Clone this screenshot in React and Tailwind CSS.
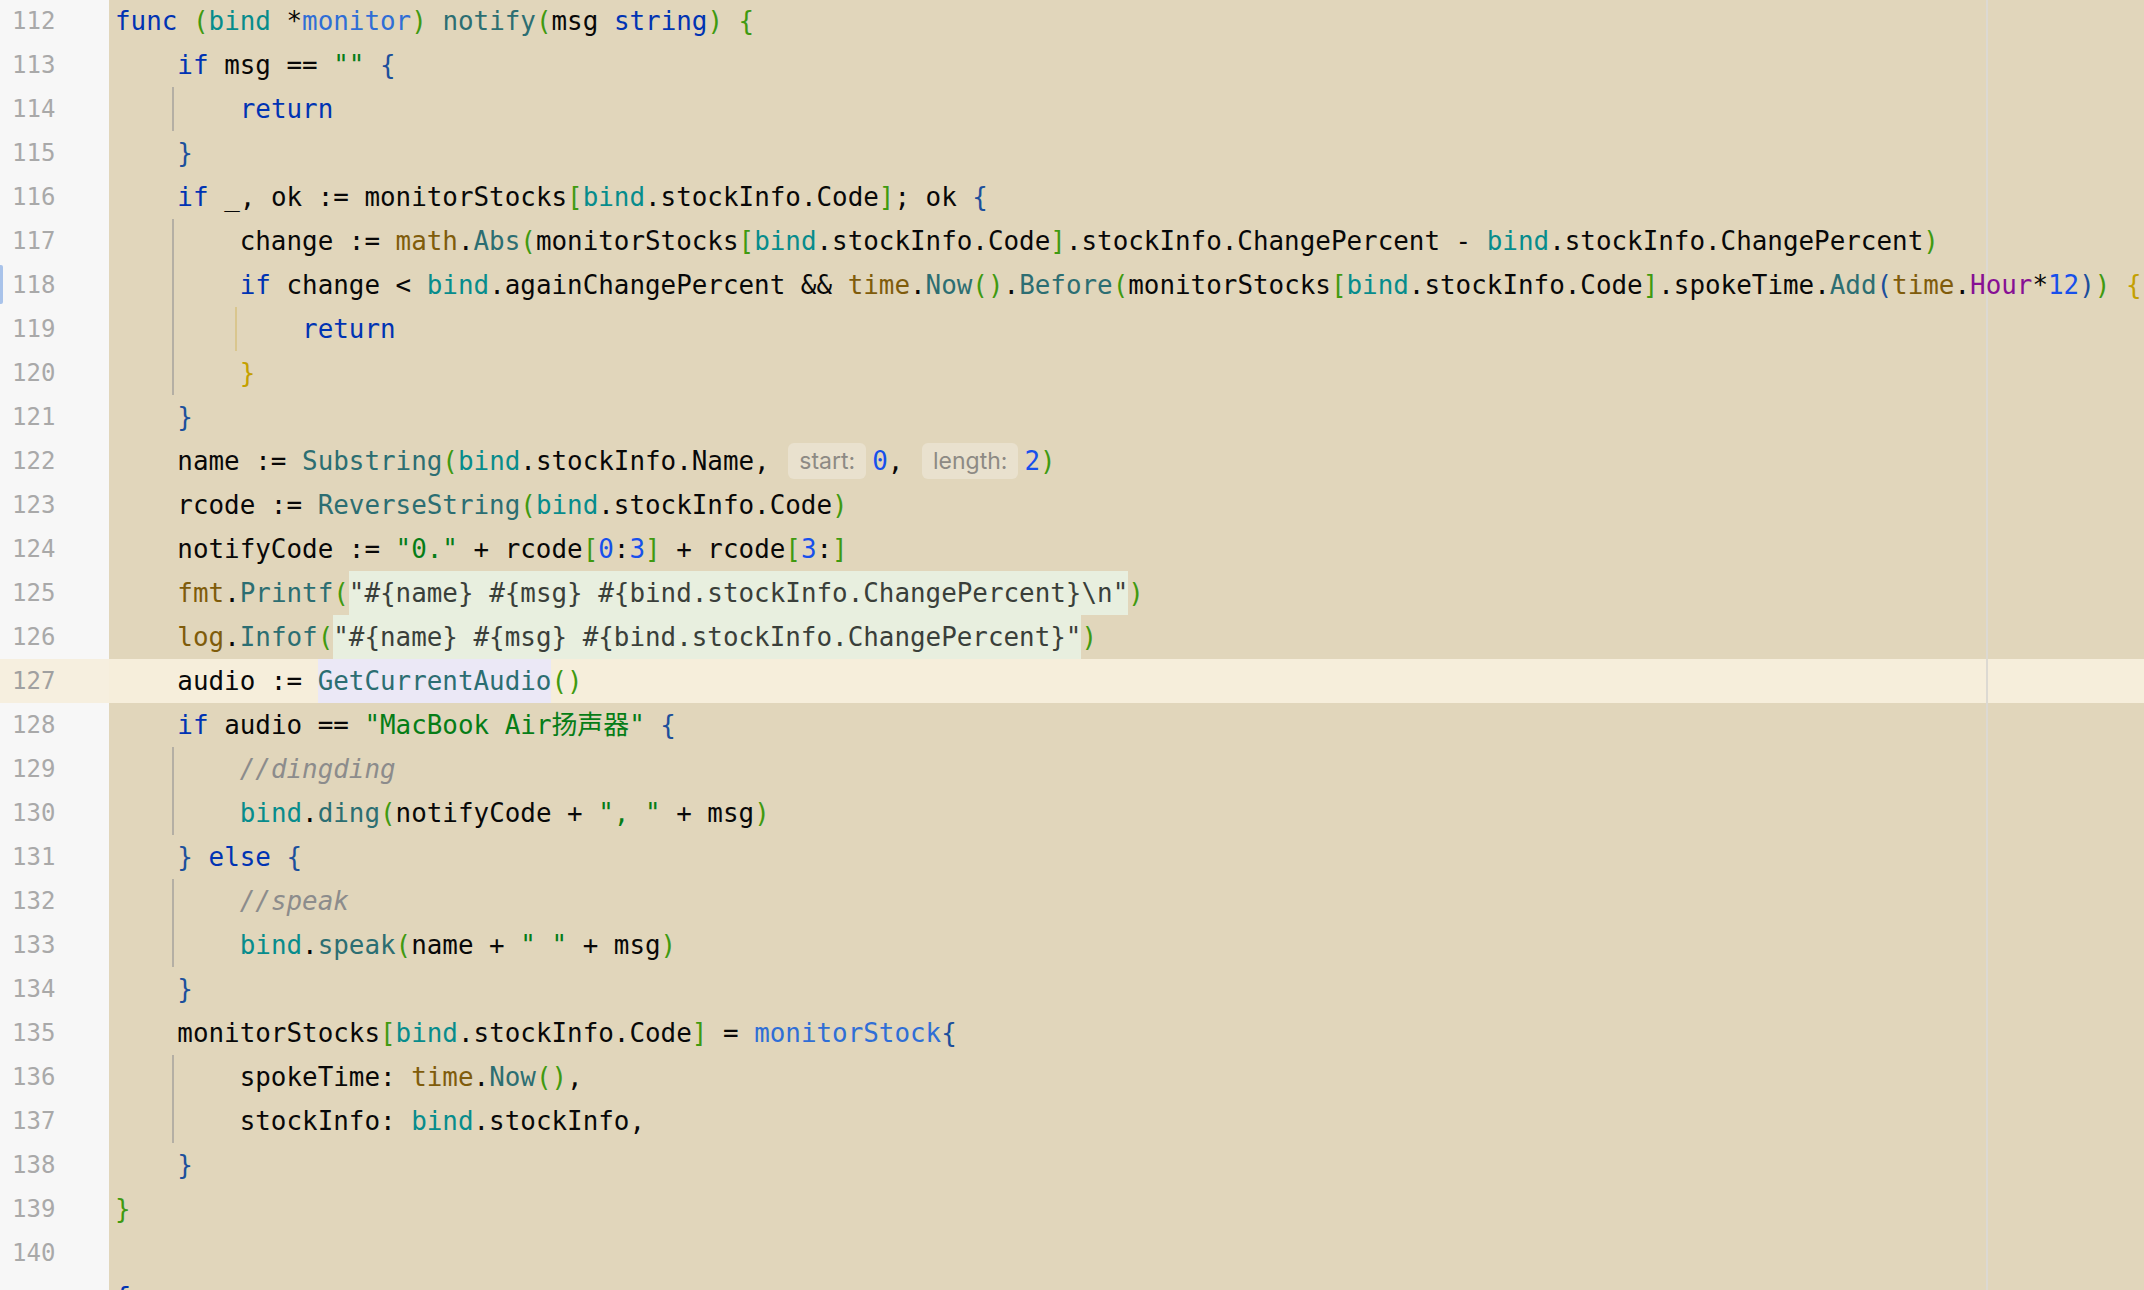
import React from "react";

const K = "text-[#0033b3]";
const R = "text-[#078c8c]";
const T = "text-[#2f6ed6]";
const F = "text-[#2c6e72]";
const P = "text-[#7f5c0b]";
const C = "text-[#871094]";
const N = "text-[#1750eb]";
const S = "text-[#067d17]";
const M = "text-[#8c8c8c] italic";
const G = "text-[#3f9a10]";
const B = "text-[#1b4f9c]";
const Y = "text-[#c4a000]";
const D = "text-[#080808]";
const SB = "text-[#3a3f3a] bg-[#e8efdf]";
const LV = "text-[#2c6e72] bg-[#ebe8f6]";

const t = (text, cls = D) => ({ text, cls });
const hint = (text) => ({ hint: text });

const lines = [
  [t("func", K), t(" "), t("(", G), t("bind", R), t(" *"), t("monitor", T), t(")", G), t(" "), t("notify", F), t("(", G), t("msg "), t("string", K), t(")", G), t(" "), t("{", G)],
  [t("    "), t("if", K), t(" msg == "), t('""', S), t(" "), t("{", B)],
  [t("        "), t("return", K)],
  [t("    "), t("}", B)],
  [t("    "), t("if", K), t(" _, ok := monitorStocks"), t("[", G), t("bind", R), t(".stockInfo.Code"), t("]", G), t("; ok "), t("{", B)],
  [t("        change := "), t("math", P), t("."), t("Abs", F), t("(", G), t("monitorStocks"), t("[", G), t("bind", R), t(".stockInfo.Code"), t("]", G), t(".stockInfo.ChangePercent - "), t("bind", R), t(".stockInfo.ChangePercent"), t(")", G)],
  [t("        "), t("if", K), t(" change < "), t("bind", R), t(".againChangePercent && "), t("time", P), t("."), t("Now", F), t("()", G), t("."), t("Before", F), t("(", G), t("monitorStocks"), t("[", G), t("bind", R), t(".stockInfo.Code"), t("]", G), t(".spokeTime."), t("Add", F), t("(", B), t("time", P), t("."), t("Hour", C), t("*"), t("12", N), t(")", B), t(")", G), t(" "), t("{", Y)],
  [t("            "), t("return", K)],
  [t("        "), t("}", Y)],
  [t("    "), t("}", B)],
  [t("    name := "), t("Substring", F), t("(", G), t("bind", R), t(".stockInfo.Name, "), hint("start:"), t("0", N), t(", "), hint("length:"), t("2", N), t(")", G)],
  [t("    rcode := "), t("ReverseString", F), t("(", G), t("bind", R), t(".stockInfo.Code"), t(")", G)],
  [t("    notifyCode := "), t('"0."', S), t(" + rcode"), t("[", G), t("0", N), t(":"), t("3", N), t("]", G), t(" + rcode"), t("[", G), t("3", N), t(":"), t("]", G)],
  [t("    "), t("fmt", P), t("."), t("Printf", F), t("(", G), t('"#{name} #{msg} #{bind.stockInfo.ChangePercent}\\n"', SB), t(")", G)],
  [t("    "), t("log", P), t("."), t("Infof", F), t("(", G), t('"#{name} #{msg} #{bind.stockInfo.ChangePercent}"', SB), t(")", G)],
  [t("    audio := "), t("GetCurrentAudio", LV), t("()", G)],
  [t("    "), t("if", K), t(" audio == "), t('"MacBook Air扬声器"', S), t(" "), t("{", B)],
  [t("        "), t("//dingding", M)],
  [t("        "), t("bind", R), t("."), t("ding", F), t("(", G), t("notifyCode + "), t('", "', S), t(" + msg"), t(")", G)],
  [t("    "), t("}", B), t(" "), t("else", K), t(" "), t("{", B)],
  [t("        "), t("//speak", M)],
  [t("        "), t("bind", R), t("."), t("speak", F), t("(", G), t("name + "), t('" "', S), t(" + msg"), t(")", G)],
  [t("    "), t("}", B)],
  [t("    monitorStocks"), t("[", G), t("bind", R), t(".stockInfo.Code"), t("]", G), t(" = "), t("monitorStock", T), t("{", B)],
  [t("        spokeTime: "), t("time", P), t("."), t("Now", F), t("()", G), t(",")],
  [t("        stockInfo: "), t("bind", R), t(".stockInfo,")],
  [t("    "), t("}", B)],
  [t("}", G)],
  [],
  [t("func", K)],
];

const GRAY = "bg-[#b4afa4]";
const YEL = "bg-[#d9c68e]";
const guides = {
  114: [["left-[63px]", GRAY]],
  117: [["left-[63px]", GRAY]],
  118: [["left-[63px]", GRAY]],
  119: [["left-[63px]", GRAY], ["left-[126px]", YEL]],
  120: [["left-[63px]", GRAY]],
  129: [["left-[63px]", GRAY]],
  130: [["left-[63px]", GRAY]],
  132: [["left-[63px]", GRAY]],
  133: [["left-[63px]", GRAY]],
  136: [["left-[63px]", GRAY]],
  137: [["left-[63px]", GRAY]],
};

function Token({ tok }) {
  if (tok.hint) {
    return (
      <span className="ml-[3px] mr-[6px] flex h-[36px] items-center rounded-[6px] bg-[#e9e1ce] px-[11px] font-['Inter',sans-serif] text-[23px] leading-[36px] text-[#8d8a84]">
        {tok.hint}
      </span>
    );
  }
  return <span className={tok.cls}>{tok.text}</span>;
}

function Row({ num, toks }) {
  const current = num === 127;
  return (
    <div className={`flex h-[44px] ${current ? "bg-[#f6eedb]" : ""}`}>
      <div
        className={`relative w-[109px] shrink-0 pl-[12px] font-['DejaVu_Sans_Mono',monospace] text-[24px] leading-[44px] ${
          current ? "bg-[#f6efdf] text-[#a0a0a0]" : "bg-[#f7f7f7] text-[#a9a9a9]"
        }`}
      >
        {num <= 140 ? num : ""}
        {num === 118 && (
          <span className="absolute left-0 top-[2px] bottom-[3px] w-[3px] rounded-r-[2px] bg-[#a9c3ea]" />
        )}
      </div>
      <div className="relative z-[1] flex h-[44px] items-center whitespace-pre pl-[6px] font-['DejaVu_Sans_Mono','Noto_Sans_CJK_SC',monospace] text-[25.9px] leading-[44px] text-[#080808]">
        {(guides[num] || []).map(([l, c], i) => (
          <span key={i} className={`absolute top-0 bottom-0 w-[2px] ${l} ${c}`} />
        ))}
        {toks.map((tok, i) => (
          <Token key={i} tok={tok} />
        ))}
      </div>
    </div>
  );
}

export default function App() {
  return (
    <div className="relative h-[1290px] w-[2144px] overflow-hidden bg-[#e1d6bb]">
      <div className="-mt-[1px]">
        {lines.map((toks, i) => (
          <Row key={i} num={112 + i} toks={toks} />
        ))}
      </div>
      <div className="absolute left-[1986px] top-0 bottom-0 w-[2px] bg-[#dcd9d2]" />
    </div>
  );
}
